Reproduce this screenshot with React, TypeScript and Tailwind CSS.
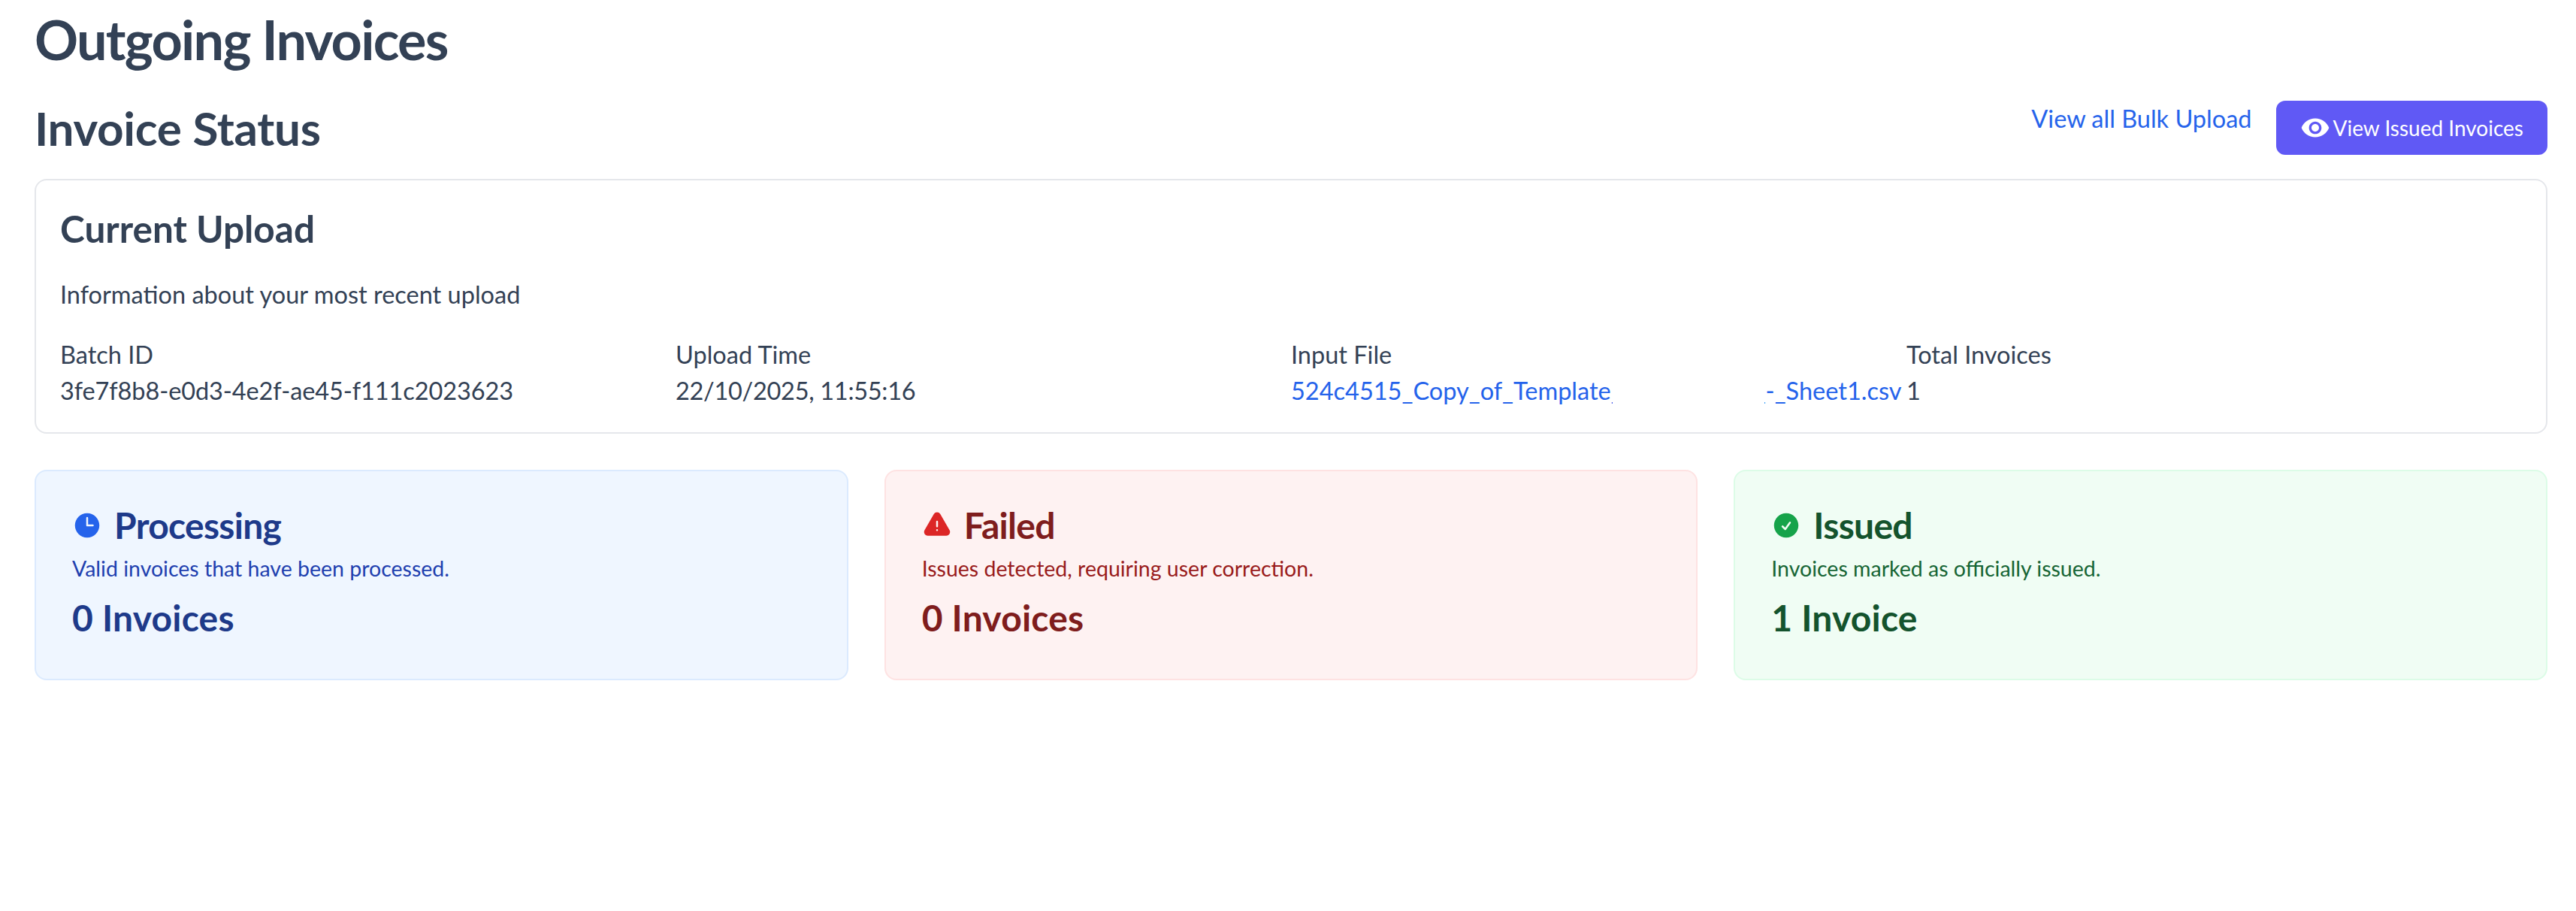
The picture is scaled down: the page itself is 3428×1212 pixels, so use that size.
import React from "react";
import { HiCheckCircle, HiClock, HiExclamationTriangle } from "react-icons/hi2";
import { MdVisibility } from "react-icons/md";

const details = [
  { label: "Batch ID", value: "3fe7f8b8-e0d3-4e2f-ae45-f111c2023623", valueClass: "tracking-[-0.1px]" },
  { label: "Upload Time", value: "22/10/2025, 11:55:16", valueClass: "tracking-[-0.3px]" },
];

const statusCards = [
  {
    title: "Processing",
    description: "Valid invoices that have been processed.",
    count: "0 Invoices",
    icon: <HiClock className="w-10 h-10 text-[#2563eb]" />,
    box: "bg-[#eff6ff] border-[#dbeafe]",
    heading: "text-[#1e3a8a]",
    desc: "text-[#1e40af]",
  },
  {
    title: "Failed",
    description: "Issues detected, requiring user correction.",
    count: "0 Invoices",
    icon: <HiExclamationTriangle className="w-10 h-10 text-[#dc2626]" />,
    box: "bg-[#fef2f2] border-[#fee2e2]",
    heading: "text-[#7f1d1d]",
    desc: "text-[#991b1b]",
  },
  {
    title: "Issued",
    description: "Invoices marked as officially issued.",
    count: "1 Invoice",
    icon: <HiCheckCircle className="w-10 h-10 text-[#16a34a]" />,
    box: "bg-[#f0fdf4] border-[#dcfce7]",
    heading: "text-[#14532d]",
    desc: "text-[#166534]",
  },
];

export default function App() {
  return (
    <div className="min-h-[1212px] bg-white pl-[46px] pr-[38px] pt-3 font-['Lato',sans-serif] text-[32.5px] leading-[48px] text-[#334155]">
      <h1 className="text-[72px] leading-[80px] font-bold tracking-[-1.76px]">
        Outgoing Invoices
      </h1>

      <div className="mt-[42px] flex items-start justify-between">
        <h2 className="text-[62px] leading-[72px] font-bold tracking-[-0.3px]">Invoice Status</h2>
        <div className="flex items-start gap-8">
          <a className="text-[#2563eb]">View all Bulk Upload</a>
          <button className="flex h-[72px] items-center gap-1 rounded-xl bg-[#6059f5] px-8 text-[28px] text-white">
            <MdVisibility className="w-10 h-10" />
            View Issued Invoices
          </button>
        </div>
      </div>

      <div className="mt-8 rounded-2xl border-2 border-[#e5e7eb] px-8 pt-8 pb-[31px]">
        <h3 className="text-[49.5px] leading-[64px] font-bold">Current Upload</h3>
        <p className="mt-8">Information about your most recent upload</p>
        <div className="mt-8 grid grid-cols-4">
          {details.map((d) => (
            <div key={d.label}>
              <div>{d.label}</div>
              <div className={d.valueClass}>{d.value}</div>
            </div>
          ))}
          <div>
            <div>Input File</div>
            <a className="relative flex whitespace-nowrap text-[#2563eb]">
              <span>524c4515_Copy_of_Template_</span>
              <span className="w-[176px] shrink-0" />
              <span>_-_Sheet1.csv</span>
              {/* the middle of the file name is blanked out in the picture */}
              <span className="absolute inset-y-0 left-[428px] w-[202px] bg-white" />
            </a>
          </div>
          <div>
            <div>Total Invoices</div>
            <div>1</div>
          </div>
        </div>
      </div>

      <div className="mt-12 grid grid-cols-3 gap-12">
        {statusCards.map((card) => (
          <div key={card.title} className={`rounded-2xl border-2 px-12 pt-12 pb-[51px] ${card.box}`}>
            <div className={`flex items-center gap-4 text-[48px] leading-[48px] font-bold tracking-[-0.7px] ${card.heading}`}>
              {card.icon}
              {card.title}
            </div>
            <p className={`mt-[13px] text-[28.5px] leading-[40px] ${card.desc}`}>{card.description}</p>
            <div className={`mt-4 text-[48px] leading-[60px] font-bold tracking-[0.2px] ${card.heading}`}>
              {card.count}
            </div>
          </div>
        ))}
      </div>
    </div>
  );
}
